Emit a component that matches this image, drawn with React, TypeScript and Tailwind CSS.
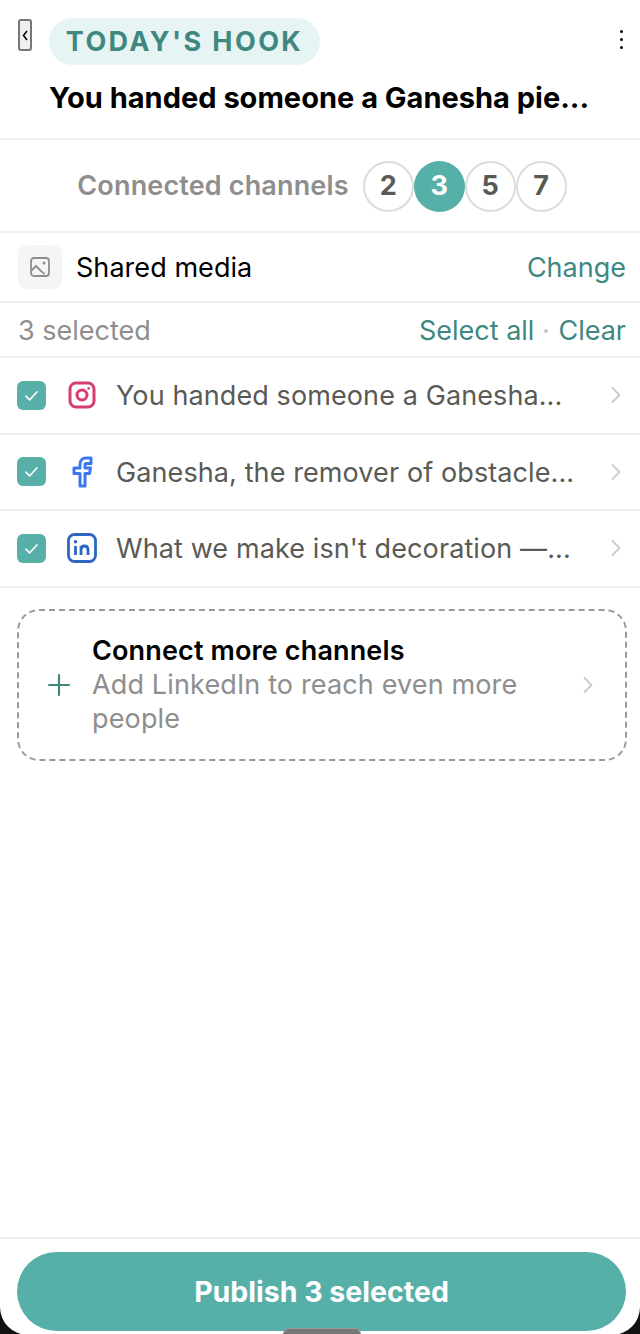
import { ChevronRight, Plus } from "lucide-react";

const ROWS = [
  { text: "You handed someone a Ganesha...", icon: "instagram" },
  { text: "Ganesha, the remover of obstacle...", icon: "facebook" },
  { text: "What we make isn't decoration —...", icon: "linkedin" },
];

function Check() {
  return (
    <div className="flex h-[29px] w-[29px] shrink-0 items-center justify-center rounded-[6px] bg-[#57b0a8]">
      <svg width="15" height="15" viewBox="0 0 24 24" fill="none" stroke="white" strokeWidth="2.4" strokeLinecap="round" strokeLinejoin="round">
        <path d="M3 13l6 6L21 6" />
      </svg>
    </div>
  );
}

function SocialIcon({ name }: { name: string }) {
  if (name === "instagram") {
    return (
      <svg width="28" height="28" viewBox="0 0 28 28" fill="none" stroke="#d53f6f" strokeWidth="3">
        <rect x="2" y="2" width="24" height="24" rx="6" />
        <circle cx="14" cy="14" r="5" />
        <circle cx="20.6" cy="7.4" r="1.3" fill="#d53f6f" stroke="none" />
      </svg>
    );
  }
  if (name === "facebook") {
    return (
      <svg width="24" height="32" viewBox="0 0 24 32" fill="none" stroke="#3b78f0" strokeWidth="3" strokeLinejoin="round">
        <path d="M21 2h-5c-3.500 0-6 2.600-6 6v4H4v5.500h6V30h5V17.500h4.500l1-5.500H15V9c0-1 .6-1.500 1.500-1.500H21z" />
      </svg>
    );
  }
  return (
    <svg width="30" height="30" viewBox="0 0 30 30" fill="none">
      <rect x="1.5" y="1.5" width="27" height="27" rx="6" stroke="#2f66c0" strokeWidth="2.8" />
      <path d="M8.500 13v9M14 22v-9M14 17c0-2.500 1.500-4 3.500-4s3.500 1.300 3.500 4v5" stroke="#2f66c0" strokeWidth="2.8" />
      <circle cx="8.5" cy="8.8" r="1.8" fill="#2f66c0" />
    </svg>
  );
}

export default function App() {
  return (
    <div className="relative h-[1334px] w-[640px] overflow-hidden bg-[#111111] font-['Inter',sans-serif]">
      <div className="flex h-[1335px] flex-col rounded-b-[28px] bg-white">
        {/* Header */}
        <header className="h-[140px] shrink-0 border-b-2 border-[#f1ede8] px-[18px] pt-[18px]">
          <div className="flex items-start">
            <button className="mr-[17px] mt-[1px] flex h-[32px] w-[14px] items-center justify-center rounded-[3px] border-2 border-[#767676] bg-[#efefef] text-black">
              <svg width="6" height="11" viewBox="0 0 6 11" fill="none" stroke="black" strokeWidth="1.5">
                <path d="M5 1L1.500 5.500L5 10" />
              </svg>
            </button>
            <span className="flex h-[47px] w-[271px] items-center justify-center rounded-full bg-[#e6f4f3] pt-[2px] text-[27px] font-bold tracking-[2.4px] text-[#40887f]">
              TODAY'S HOOK
            </span>
            <div className="ml-auto mr-[-1px] mt-[12px] flex flex-col gap-[5px]">
              <span className="h-[3px] w-[3px] rounded-full bg-black" />
              <span className="h-[3px] w-[3px] rounded-full bg-black" />
              <span className="h-[3px] w-[3px] rounded-full bg-black" />
            </div>
          </div>
          <h1 className="mt-[13px] pl-[31px] text-[29px] leading-[40px] font-bold whitespace-nowrap text-black">
            You handed someone a Ganesha pie...
          </h1>
        </header>

        {/* Channel count */}
        <div className="flex h-[93px] shrink-0 items-center justify-center border-b-2 border-[#f1ede8] pl-[4px] pt-[1px]">
          <span className="mr-[14px] text-[27px] font-semibold tracking-[0.15px] text-[#8e8e8e]">Connected channels</span>
          {[2, 3, 5, 7].map((n) => (
            <span
              key={n}
              className={
                n === 3
                  ? "flex h-[51px] w-[51px] items-center justify-center rounded-full bg-[#57b0a8] text-[27px] font-bold text-white"
                  : "flex h-[51px] w-[51px] items-center justify-center rounded-full border-2 border-[#dcdcdc] text-[27px] font-bold text-[#5a5a55]"
              }
            >
              {n}
            </span>
          ))}
        </div>

        {/* Shared media */}
        <div className="flex h-[70px] shrink-0 items-center border-b-2 border-[#f1ede8] px-[18px]">
          <div className="flex h-[44px] w-[44px] items-center justify-center rounded-[8px] bg-[#f5f5f5]">
            <svg width="20" height="20" viewBox="0 0 20 20" fill="none" stroke="#8e8e8e" strokeWidth="1.8" strokeLinejoin="round">
              <rect x="1" y="1" width="18" height="18" rx="3" />
              <path d="M1.500 13.500L6 9l3.500 3.500c2 2 3.500 3 5 4.500" />
              <circle cx="14" cy="6" r="0.6" fill="#8e8e8e" />
            </svg>
          </div>
          <span className="ml-[14px] pt-[2px] text-[27px] tracking-[0.05px] text-black">Shared media</span>
          <span className="ml-auto mr-[-4px] pt-[2px] text-[27px] text-[#40887f]">Change</span>
        </div>

        {/* Selection */}
        <div className="flex h-[55px] shrink-0 items-center border-b-2 border-[#f1ede8] px-[18px] pt-[3px]">
          <span className="text-[27px] text-[#8e8e8e]">3 selected</span>
          <span className="ml-auto mr-[-4px] flex items-center text-[27px] text-[#40887f]">
            Select all
            <span className="mx-[10px] h-[4px] w-[4px] rounded-full bg-[#c4c4c4]" />
            Clear
          </span>
        </div>

        {/* Channels */}
        {ROWS.map((row) => (
          <div key={row.icon} className="flex h-[76.5px] shrink-0 items-center border-b-2 border-[#f1ede8] pl-[17px] pr-[18px]">
            <Check />
            <div className="ml-[20px] flex w-[32px] shrink-0 justify-center">
              <SocialIcon name={row.icon} />
            </div>
            <span className="ml-[18px] min-w-0 flex-1 pt-[2px] text-[27px] tracking-[0.1px] whitespace-nowrap text-[#5a5a55]">{row.text}</span>
            <ChevronRight size={28} strokeWidth={1.6} className="mr-[-8px] shrink-0 text-[#cccccc]" />
          </div>
        ))}

        {/* Connect more */}
        <div className="ml-[17px] mr-[13px] mt-[21px] flex h-[152px] shrink-0 items-center rounded-[22px] border-2 border-dashed border-[#9a9a9a] pl-[23px] pr-[23px]">
          <Plus size={34} strokeWidth={1.5} className="shrink-0 text-[#40887f]" />
          <div className="ml-[16px] flex-1 tracking-[0.14px]">
            <p className="text-[27px] leading-[34px] font-semibold text-black">Connect more channels</p>
            <p className="text-[27px] leading-[34px] text-[#8e8e8e]">Add LinkedIn to reach even more people</p>
          </div>
          <ChevronRight size={28} strokeWidth={1.6} className="shrink-0 text-[#cccccc]" />
        </div>

        {/* Footer */}
        <div className="mt-auto h-[98px] shrink-0 border-t-2 border-[#f1ede8] px-[17px] pt-[13px]">
          <button className="flex h-[79px] w-[609px] items-center justify-center rounded-[40px] bg-[#57b0a8] pt-[2px] text-[28.5px] font-bold text-white">
            Publish 3 selected
          </button>
        </div>
      </div>

      {/* Home indicator peeking up */}
      <div className="absolute bottom-0 left-[283px] h-[6px] w-[78px] rounded-t-[6px] border-x border-t border-[#9a9a9a] bg-[#777777]" />
    </div>
  );
}
